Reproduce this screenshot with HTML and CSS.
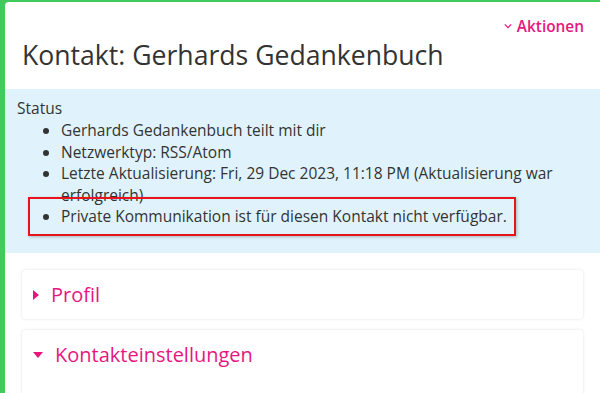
FILE: index.html
```html
<!DOCTYPE html>
<html lang="de">
<head>
  <meta charset="UTF-8" />
  <meta name="viewport" content="width=device-width, initial-scale=1.0" />
  <title>Kontakt: Gerhards Gedankenbuch</title>
  <link rel="stylesheet" href="styles.css">
</head>
<body>

<div class="page">

  <!-- Kopfbereich -->
  <div class="contact-head">
    <div class="actions">
      <a href="#" class="actions-link">
        <svg viewBox="0 0 10 6" class="chevron"><path d="M1 1l4 4 4-4" /></svg>
        Aktionen
      </a>
    </div>
    <h1>Kontakt: Gerhards Gedankenbuch</h1>
  </div>

  <!-- Status -->
  <div class="status-box">
    <div class="status-title">Status</div>
    <ul class="status-list">
      <li>Gerhards Gedankenbuch teilt mit dir</li>
      <li>Netzwerktyp: RSS/Atom</li>
      <li>Letzte Aktualisierung: Fri, 29 Dec 2023, 11:18 PM (Aktualisierung war erfolgreich)</li>
      <li><span class="mark">Private Kommunikation ist für diesen Kontakt nicht verfügbar.</span></li>
    </ul>
  </div>

  <!-- Bereiche -->
  <div class="sections">
    <div class="panel">
      <div class="panel-title">
        <span class="caret caret-right"></span>
        Profil
      </div>
    </div>
    <div class="panel panel-open">
      <div class="panel-title">
        <span class="caret caret-down"></span>
        Kontakteinstellungen
      </div>
    </div>
  </div>

</div>

</body>
</html>
```

FILE: styles.css
```css
html, body {
  height: 100%;
}

body {
  font-family: 'Open Sans', 'Noto Sans', sans-serif;
  background: #3fcc5d;
  margin: 0;
  padding: 2px 0 0 5px;
  color: #333;
  overflow: hidden;
  box-sizing: border-box;
}

.page {
  background: #fff;
  border-top-left-radius: 4px;
  min-height: 100%;
}

.contact-head {
  padding: 13px 16px 17px 17px;
}

.actions {
  text-align: right;
  height: 20px;
}

.actions-link {
  color: #e5177f;
  text-decoration: none;
  font-size: 15.4px;
  font-weight: 600;
  line-height: 20px;
}

.chevron {
  width: 8px;
  height: 6px;
  fill: none;
  stroke: #e5177f;
  stroke-width: 1.6;
  vertical-align: 3px;
  margin-right: 1px;
}

h1 {
  margin: 3px 0 0;
  font-size: 26.6px;
  font-weight: 400;
  line-height: 34px;
  color: #333;
}

.status-box {
  background: #e0f3fc;
  padding: 9px 12px 26px;
  font-size: 15.5px;
  line-height: 21.4px;
}

.status-list {
  margin: 1px 0 0;
  padding-left: 44px;
}

.mark {
  position: relative;
}

/* roter Markierungsrahmen */
.mark::after {
  content: "";
  position: absolute;
  left: -33px;
  right: -9px;
  top: -8px;
  bottom: -9px;
  border: 2px solid #e8141b;
  box-shadow: 1px 1px 3px rgba(0,0,0,0.25);
}

.sections {
  padding: 17px 17px 0 17px;
  display: flex;
  flex-direction: column;
  gap: 11px;
}

.panel {
  border-radius: 4px;
  box-shadow: 0 0 3px rgba(0,0,0,0.12);
  background: #fff;
  height: 49px;
  box-sizing: border-box;
}

.panel-open {
  height: 120px;
}

.panel-title {
  color: #e5177f;
  font-size: 20px;
  line-height: 26px;
  padding: 12px 11px;
  display: flex;
  align-items: center;
  gap: 12px;
}

.caret {
  display: inline-block;
  width: 0;
  height: 0;
}

.caret-right {
  border-top: 5px solid transparent;
  border-bottom: 5px solid transparent;
  border-left: 6px solid #e5177f;
}

.caret-down {
  border-left: 5.5px solid transparent;
  border-right: 5.5px solid transparent;
  border-top: 6px solid #e5177f;
}
```
